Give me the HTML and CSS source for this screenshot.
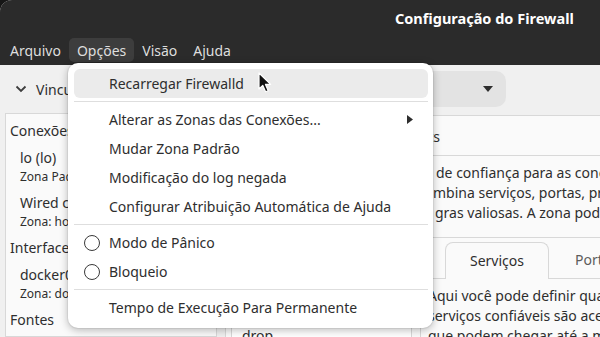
FILE: index.html
```html
<!DOCTYPE html>
<html lang="pt-BR">
<head>
    <meta charset="UTF-8">
    <meta name="viewport" content="width=device-width, initial-scale=1.0">
    <title>Configuração do Firewall</title>
    <link rel="stylesheet" href="styles.css">
</head>
<body>

    <div class="window">
        <header class="headerbar">
            <div class="titlebar">
                <span class="title">Configuração do Firewall</span>
            </div>
            <nav class="menubar">
                <span class="menubar-item">Arquivo</span>
                <span class="menubar-item active">Opções</span>
                <span class="menubar-item">Visão</span>
                <span class="menubar-item">Ajuda</span>
            </nav>
        </header>

        <div class="toolbar">
            <div class="bindings">
                <svg class="chevron" width="12" height="8" viewBox="0 0 12 8">
                    <path d="M1.5 1.5 L6 6 L10.5 1.5" fill="none" stroke="#3d3d3d" stroke-width="1.8"/>
                </svg>
                <span>Vinculações</span>
            </div>
            <div class="config">
                <span class="config-label">Configuração:</span>
                <div class="combo">
                    <span>Tempo de execução</span>
                    <svg width="10" height="6" viewBox="0 0 10 6"><path d="M0 0 H10 L5 6 Z" fill="#2e2e2e"/></svg>
                </div>
            </div>
        </div>

        <div class="main">
            <aside class="connections">
                <div class="group-title">Conexões Ativas</div>
                <div class="conn">
                    <div class="conn-name">lo (lo)</div>
                    <div class="conn-zone">Zona Padrão: public</div>
                </div>
                <div class="conn">
                    <div class="conn-name">Wired connection 1 (enp0s3)</div>
                    <div class="conn-zone">Zona: home</div>
                </div>
                <div class="group-title">Interfaces</div>
                <div class="conn">
                    <div class="conn-name">docker0</div>
                    <div class="conn-zone">Zona: docker</div>
                </div>
                <div class="group-title">Fontes</div>
            </aside>

            <section class="zones">
                <div class="zone-tabs">
                    <span class="zone-tab">Serviços</span>
                    <span class="zone-tab">IPSets</span>
                </div>
                <div class="desc">
                    <div class="desc-line"><span class="pre pre-1">Uma zona firewalld define o nível </span>de confiança para as conexões de rede, interfaces</div>
                    <div class="desc-line"><span class="pre pre-2">e endereços de origem vinculados à zona. A zona co</span>mbina serviços, portas, protocolos, mascaramento</div>
                    <div class="desc-line"><span class="pre pre-3">encaminhamento de porta/pacote, filtros ICMP e re</span>gras valiosas. A zona pode ser vinculada a interfaces</div>
                </div>
                <div class="zone-body">
                    <div class="zone-list">
                        <div class="zone-row">block</div>
                        <div class="zone-row">dmz</div>
                        <div class="zone-row">docker</div>
                        <div class="zone-row">drop</div>
                    </div>
                    <div class="notebook">
                        <div class="nb-tabs">
                            <span class="nb-tab selected">Serviços</span>
                            <span class="nb-tab">Portas</span>
                        </div>
                        <div class="nb-page">
                            <p>Aqui você pode definir quais serviços são confiáveis na zona. Os</p>
                            <p>serviços confiáveis são acessíveis a partir de todos os hosts e redes</p>
                            <p>que podem chegar até a máquina a partir de conexões</p>
                        </div>
                    </div>
                </div>
            </section>
        </div>

        <div class="popup">
            <div class="item hover"><span class="slot"></span>Recarregar Firewalld</div>
            <div class="sep"></div>
            <div class="item"><span class="slot"></span>Alterar as Zonas das Conexões...
                <svg class="sub-arrow" width="6" height="9" viewBox="0 0 6 9"><path d="M0 0 L6 4.5 L0 9 Z" fill="#2e2e2e"/></svg>
            </div>
            <div class="item"><span class="slot"></span>Mudar Zona Padrão</div>
            <div class="item"><span class="slot"></span>Modificação do log negada</div>
            <div class="item"><span class="slot"></span>Configurar Atribuição Automática de Ajuda</div>
            <div class="sep"></div>
            <div class="item"><span class="slot radio"></span>Modo de Pânico</div>
            <div class="item"><span class="slot radio"></span>Bloqueio</div>
            <div class="sep"></div>
            <div class="item"><span class="slot"></span>Tempo de Execução Para Permanente</div>
        </div>

        <svg class="cursor" width="14" height="22" viewBox="0 0 14 22">
            <path d="M1 1 L1 17 L4.8 13.4 L7.6 19.8 L10.2 18.7 L7.5 12.4 L12.6 12.4 Z" fill="#111" stroke="#fff" stroke-width="1.2" stroke-linejoin="round"/>
        </svg>
    </div>

</body>
</html>
```

FILE: styles.css
```css
body {
    margin: 0;
    background-color: #161616;
    font-family: "Noto Sans", sans-serif;
    font-size: 14px;
    color: #2e2e2e;
}

.window {
    position: relative;
    width: 600px;
    height: 337px;
    overflow: hidden;
    background-color: #f0f0f0;
    border-top-left-radius: 12px;
}

/* dark header with title and menus */
.headerbar {
    background-color: #2b2b2b;
    height: 65px;
}

.titlebar {
    height: 35px;
    display: flex;
    align-items: center;
    padding-left: 395px;
}

.title {
    color: #fff;
    font-weight: bold;
    font-size: 14.5px;
}

.menubar {
    display: flex;
    padding-left: 2px;
    padding-top: 3px;
}

.menubar-item {
    color: #dedede;
    padding: 0 8px;
    height: 24px;
    line-height: 25px;
    border-radius: 5px;
}

.menubar-item.active {
    background-color: #3d3d3d;
}

/* toolbar */
.toolbar {
    height: 48px;
    display: flex;
    align-items: center;
}

.bindings {
    display: flex;
    align-items: center;
    padding-left: 15px;
    gap: 9px;
}

.config {
    display: flex;
    align-items: center;
    gap: 10px;
    margin-left: auto;
    margin-right: 94px;
}

.combo {
    display: flex;
    align-items: center;
    justify-content: space-between;
    width: 230px;
    height: 36px;
    padding: 0 13px 0 14px;
    box-sizing: border-box;
    background-color: #e3e3e3;
    border-radius: 10px;
}

/* main area */
.main {
    display: flex;
    height: 224px;
}

.connections {
    margin-left: 5px;
    width: 212px;
    flex-shrink: 0;
    background-color: #fafafa;
    border: 1px solid #d8d8d8;
    box-sizing: border-box;
    padding-left: 4px;
    white-space: nowrap;
    overflow: hidden;
}

.group-title {
    padding-top: 7px;
    line-height: 20px;
}

.conn {
    padding-top: 7px;
    padding-left: 10px;
}

.conn-name {
    line-height: 20px;
}

.conn-zone {
    font-size: 12px;
    line-height: 18px;
}

.zones {
    flex: 1;
    min-width: 0;
    margin-left: 8px;
    margin-top: 2px;
    background-color: #fafafa;
    border-top: 1px solid #d8d8d8;
    border-left: 1px solid #d8d8d8;
    white-space: nowrap;
    overflow: hidden;
}

.zone-tabs {
    height: 40px;
    display: flex;
    align-items: center;
    justify-content: flex-end;
    padding-right: 160px;
    padding-top: 2px;
    box-sizing: border-box;
    gap: 30px;
    border-bottom: 1px solid #d8d8d8;
}

.desc {
    padding: 7px 0 14px 11px;
    border-bottom: 1px solid #d8d8d8;
}

.desc-line {
    line-height: 20px;
}

.pre {
    display: inline-block;
    width: 196px;
    overflow: hidden;
    vertical-align: bottom;
}

.pre-1 { margin-right: 3px; }
.pre-3 { margin-right: 2px; }

.zone-body {
    display: flex;
    padding-left: 5px;
    padding-top: 4px;
}

.zone-list {
    width: 181px;
    flex-shrink: 0;
    height: 120px;
    border: 1px solid #d8d8d8;
    background-color: #fff;
    padding-top: 2px;
    box-sizing: border-box;
}

.zone-row {
    height: 26px;
    line-height: 26px;
    padding-left: 10px;
}

.notebook {
    margin-left: 8px;
    flex: 1;
    min-width: 0;
}

.nb-tabs {
    display: flex;
    padding-left: 25px;
    height: 36px;
    border-bottom: 1px solid #d8d8d8;
}

.nb-tab {
    height: 36px;
    line-height: 36px;
    padding: 0 26px;
    color: #5c5c5c;
    box-sizing: border-box;
    flex-shrink: 0;
}

.nb-tab.selected {
    width: 104px;
    padding: 0;
    text-align: center;
    height: 37px;
    color: #2e2e2e;
    background-color: #fafafa;
    border: 1px solid #d8d8d8;
    border-bottom: none;
    border-radius: 8px 8px 0 0;
}

.nb-page {
    border-left: 1px solid #d8d8d8;
    padding: 7px 0 0 7px;
    height: 100px;
}

.nb-page p {
    margin: 0;
    line-height: 20px;
}

/* options popup menu */
.popup {
    position: absolute;
    left: 68px;
    top: 63px;
    width: 365px;
    box-sizing: border-box;
    padding: 6px 5px 6px 6px;
    background-color: #fff;
    border-radius: 10px;
    box-shadow: 0 2px 8px rgba(0, 0, 0, 0.28), 0 0 0 1px rgba(0, 0, 0, 0.05);
}

.item {
    height: 29px;
    display: flex;
    align-items: center;
    padding: 0 15px 0 10px;
    border-radius: 6px;
}

.item.hover {
    background-color: #ebebeb;
}

.slot {
    width: 16px;
    height: 16px;
    margin-right: 9px;
    box-sizing: border-box;
    flex-shrink: 0;
}

.slot.radio {
    border: 1.6px solid #3a3a3a;
    border-radius: 50%;
}

.sub-arrow {
    margin-left: auto;
}

.sep {
    height: 1px;
    margin: 3px 0;
    background-color: #dedede;
}

.cursor {
    position: absolute;
    left: 258px;
    top: 72px;
}
```
